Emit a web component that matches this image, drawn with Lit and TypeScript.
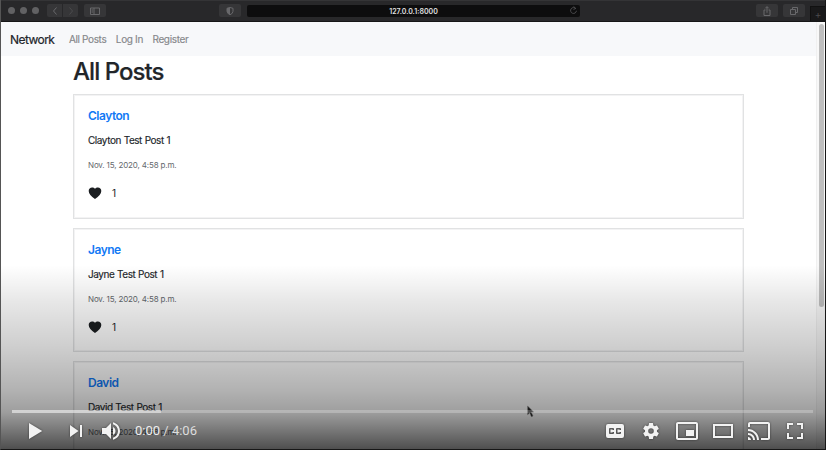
import { LitElement, html, css, svg } from "lit";
import { customElement, property } from "lit/decorators.js";

@customElement("post-card")
class PostCard extends LitElement {
  @property() author = "";

  static styles = css`
    :host { display: block; box-sizing: border-box; height: 124.5px; border: 1px solid #e1e2e3; box-shadow: inset 0 0 0 1px #f3f3f4; padding: 0 14px; color: #212529; }
    .author { padding-top: 13px; height: 29px; line-height: 16px; box-sizing: border-box; font-size: 12px; font-weight: 600; letter-spacing: -0.5px; color: #1279f5; }
    .body { margin: 9px 0 0; height: 14px; line-height: 14px; font-size: 10px; letter-spacing: -0.45px; word-spacing: 0.4px; -webkit-text-stroke: 0.15px; }
    .date { margin: 12px 0 0; height: 12px; line-height: 12px; font-size: 8px; letter-spacing: -0.15px; color: #65696d; }
    .likes { display: flex; align-items: center; gap: 10px; margin-top: 14px; height: 16px; font-size: 10px; }
    .heart { width: 14px; height: 14px; display: block; }
  `;

  render() {
    return html`
      <div class="author">${this.author}</div>
      <div class="body">${this.author} Test Post 1</div>
      <div class="date">Nov. 15, 2020, 4:58 p.m.</div>
      <div class="likes">
        <svg class="heart" viewBox="0 0 14 14"><path fill="#1b1e21" d="M7 13C3 9.8.7 7.7.7 4.9 .7 2.9 2.2 1.4 4.1 1.4c1.1 0 2.2.5 2.9 1.4.7-.9 1.8-1.4 2.9-1.4 1.9 0 3.4 1.5 3.4 3.5C13.3 7.7 11 9.8 7 13z"/></svg>
        <span>1</span>
      </div>`;
  }
}

const icons = {
  play: svg`<path d="M12 26V10l13.2 8z"/>`,
  next: svg`<path d="M12 24l8.5-6L12 12zM22 12v12h2V12z"/>`,
  volume: svg`<path d="M8 21h4l5 5V10l-5 5H8zM19 14v8c1.48-.68 2.5-2.23 2.5-4 0-1.74-1.02-3.26-2.5-4zM19 11.29c2.89.86 5 3.54 5 6.71s-2.11 5.85-5 6.71v2.06c4.01-.91 7-4.49 7-8.77s-2.99-7.86-7-8.77z"/>`,
  captions: svg`<path fill-rule="evenodd" d="M11 11h14a2 2 0 0 1 2 2v10a2 2 0 0 1-2 2H11a2 2 0 0 1-2-2V13a2 2 0 0 1 2-2zM17 17v-1a1 1 0 0 0-1-1h-3a1 1 0 0 0-1 1v4a1 1 0 0 0 1 1h3a1 1 0 0 0 1-1v-1h-1.5v.5h-2v-3h2v.5zM24 17v-1a1 1 0 0 0-1-1h-3a1 1 0 0 0-1 1v4a1 1 0 0 0 1 1h3a1 1 0 0 0 1-1v-1h-1.5v.5h-2v-3h2v.5z"/>`,
  settings: svg`<path fill-rule="evenodd" d="M23.94 18.78c.03-.25.05-.51.05-.78s-.02-.52-.05-.78l1.68-1.32c.15-.12.19-.33.09-.51l-1.6-2.76c-.09-.17-.31-.24-.48-.17l-1.99.8c-.41-.32-.86-.58-1.35-.78l-.3-2.12c-.02-.19-.19-.33-.39-.33h-3.2c-.2 0-.36.14-.39.33l-.3 2.12c-.48.2-.93.47-1.35.78l-1.99-.8c-.18-.07-.39 0-.48.17l-1.6 2.76c-.1.17-.05.39.09.51l1.68 1.32c-.03.25-.05.52-.05.78s.02.52.05.78l-1.68 1.32c-.15.12-.19.33-.09.51l1.6 2.76c.09.17.31.24.48.17l1.99-.8c.41.32.86.58 1.35.78l.3 2.12c.02.19.19.33.39.33h3.2c.2 0 .36-.14.39-.33l.3-2.12c.48-.2.93-.47 1.35-.78l1.99.8c.18.07.39 0 .48-.17l1.6-2.76c.1-.17.05-.39-.09-.51zM18 20.8a2.8 2.8 0 1 1 0-5.6 2.8 2.8 0 0 1 0 5.6z"/>`,
  mini: svg`<path fill-rule="evenodd" d="M25 17h-8v6h8zM29 25V10.98C29 9.88 28.1 9 27 9H9c-1.1 0-2 .88-2 1.98V25c0 1.1.9 2 2 2h18c1.1 0 2-.9 2-2zM27 25.02H9V10.97h18z"/>`,
  theater: svg`<path fill-rule="evenodd" d="M28 11H8v14h20zM26 23H10V13h16z"/>`,
  cast: svg`<path d="M27 9H9c-1.1 0-2 .9-2 2v3h2v-3h18v14h-7v2h7c1.1 0 2-.9 2-2V11c0-1.1-.9-2-2-2zM7 24v3h3c0-1.66-1.34-3-3-3zM7 20v2c2.76 0 5 2.24 5 5h2c0-3.87-3.13-7-7-7zM7 16v2c4.97 0 9 4.03 9 9h2c0-6.08-4.93-11-11-11z"/>`,
  full: svg`<path d="M10 16h2v-4h4v-2h-6zM20 10v2h4v4h2v-6zM24 24h-4v2h6v-6h-2zM12 20h-2v6h6v-2h-4z"/>`,
};
const icon = (shape: unknown) => html`<svg class="icon" viewBox="0 0 36 36">${shape}</svg>`;

@customElement("app-root")
class AppRoot extends LitElement {
  static styles = css`
    :host { display: block; position: relative; box-sizing: border-box; width: 826px; height: 450px; overflow: hidden; background: #fff; font-family: Inter, "Liberation Sans", sans-serif; }
    * { box-sizing: border-box; }
    svg { display: block; flex: none; }
    .toolbar { display: flex; align-items: center; height: 22px; padding: 0 0 1px 8px; background: #28282a; border-top: 1px solid #343436; border-bottom: 1px solid #161617; }
    .dots { display: flex; gap: 5px; }
    .dot { width: 7px; height: 7px; border-radius: 50%; background: #616163; }
    .key { height: 13px; display: flex; align-items: center; justify-content: center; background: #363638; border-radius: 2px; }
    .key svg { width: 12px; height: 12px; fill: none; stroke: #68686b; stroke-width: 1; }
    .back { width: 15px; margin-left: 8px; border-radius: 2px 0 0 2px; }
    .forward { width: 15px; margin-left: 1px; border-radius: 0 2px 2px 0; }
    .key.forward svg { stroke: #4b4b4d; }
    .sidebar { width: 22px; margin-left: 6px; }
    .shield { width: 22px; margin-left: 113px; }
    .address { position: relative; display: flex; align-items: center; justify-content: center; width: 333px; height: 12px; margin-left: 6px; padding-top: 1px; border-radius: 2px; background: #0d0d0e; color: #e0e0e0; font-size: 7px; font-weight: 600; }
    .reload { position: absolute; right: 1px; top: 0; width: 11px; height: 11px; fill: none; stroke: #4e4e50; stroke-width: 1; }
    .share { width: 22px; margin-left: 176px; }
    .tabs { width: 22px; margin-left: 5px; }
    .plus { display: flex; align-items: center; justify-content: center; width: 15px; height: 15px; margin: 6px 0 0 5px; background: #19191a; border-left: 1px solid #111; border-top: 1px solid #111; color: #4a4a4c; font-size: 10px; }
    .nav { display: flex; align-items: center; height: 34px; padding-left: 10px; background: #f7f8fa; color: #85878a; font-size: 10px; letter-spacing: -0.35px; }
    .brand { margin-right: 14.5px; color: #22252a; font-size: 12px; letter-spacing: -0.55px; -webkit-text-stroke: 0.2px; }
    .link { margin-right: 9.5px; -webkit-text-stroke: 0.15px; }
    .page { width: 671px; margin-left: 73px; }
    .title { margin: 0; height: 38px; line-height: 31px; font-size: 24px; font-weight: 500; letter-spacing: -0.95px; color: #212529; -webkit-text-stroke: 0.2px; }
    .feed { display: flex; flex-direction: column; gap: 9px; }
    .scroll { position: absolute; right: 1px; top: 22px; width: 9px; height: 428px; padding: 2px 2px 0; background: #f8f8f8; border-left: 1px solid #f0f0f0; }
    .thumb { width: 5px; height: 283px; border-radius: 3px; background: #bfbfbf; }
    .shade { position: absolute; inset: 0; background: linear-gradient(rgba(0,0,0,0) 265px, rgba(0,0,0,.09) 300px, rgba(0,0,0,.2) 350px, rgba(0,0,0,.3) 390px, rgba(0,0,0,.38) 412px, rgba(0,0,0,.53) 430px, rgba(0,0,0,.69) 449px); }
    .frame { position: absolute; inset: 0; border-left: 1px solid #555; border-right: 1px solid #171717; border-bottom: 1px solid #171717; }
    .player { position: absolute; left: 12px; right: 13px; top: 410px; }
    .track { height: 3px; background: rgba(255,255,255,.24); }
    .loaded { width: 149px; height: 3px; background: rgba(255,255,255,.4); }
    .controls { display: flex; align-items: center; height: 36px; margin-left: 5px; fill: #f2f2f2; }
    .icon { width: 36px; height: 36px; filter: drop-shadow(0 0 1px rgba(0,0,0,.5)); }
    .next { margin-left: 5px; }
    .time { margin-left: 5px; color: #eee; font: 13px/36px Roboto, sans-serif; white-space: pre; }
    .total { color: #ddd; }
    .right { display: flex; margin-left: auto; }
    .cursor { position: absolute; left: 526px; top: 405px; width: 9px; height: 13px; }
  `;

  render() {
    return html`
      <div class="toolbar">
        <div class="dots"><i class="dot"></i><i class="dot"></i><i class="dot"></i></div>
        <div class="key back"><svg viewBox="0 0 12 12"><path d="M7.5 2.5L4.5 6l3 3.5"/></svg></div>
        <div class="key forward"><svg viewBox="0 0 12 12"><path d="M4.5 2.5l3 3.5-3 3.5"/></svg></div>
        <div class="key sidebar"><svg viewBox="0 0 12 12"><path d="M1.5 3h9v6.500h-9zM5 3v6.500M2.500 5h1.500M2.500 7h1.500"/></svg></div>
        <div class="key shield"><svg viewBox="0 0 12 12"><path d="M6 2.5l3 .8v3Q9 8.500 6 9.800 3 8.500 3 6.300v-3z"/><path fill="#68686b" stroke="none" d="M6 2.500v7.300Q3 8.500 3 6.300v-3z"/></svg></div>
        <div class="address">127.0.0.1:8000<svg class="reload" viewBox="0 0 12 12"><path d="M8.500 4A3.200 3.200 0 1 0 9.200 6.300M6 1.500l2.500 2.300L6 4.800"/></svg></div>
        <div class="key share"><svg viewBox="0 0 12 12"><path d="M4.500 5H3v5.500h6V5H7.500M6 7.800V1.800M4.300 3.300L6 1.600l1.700 1.700"/></svg></div>
        <div class="key tabs"><svg viewBox="0 0 12 12"><path d="M2.500 4.500h5V9.500h-5zM4.500 4.500v-2h5v5h-2"/></svg></div>
        <div class="plus">+</div>
      </div>
      <nav class="nav"><span class="brand">Network</span><span class="link">All Posts</span><span class="link">Log In</span><span class="link">Register</span></nav>
      <main class="page">
        <h1 class="title">All Posts</h1>
        <div class="feed">${["Clayton", "Jayne", "David"].map((name) => html`<post-card author=${name}></post-card>`)}</div>
      </main>
      <div class="scroll"><div class="thumb"></div></div>
      <svg class="cursor" viewBox="0 0 10 14"><path d="M1.800 1v9.500l2.300-2 1.900 4.200 1.800-.8-2-4 2.700-.3z" fill="#222" stroke="#999" stroke-width=".6"/></svg>
      <div class="shade"></div>
      <div class="frame"></div>
      <div class="player">
        <div class="track"><div class="loaded"></div></div>
        <div class="controls">
          ${icon(icons.play)}<div class="next">${icon(icons.next)}</div>${icon(icons.volume)}
          <div class="time">0:00<span class="total"> / 4:06</span></div>
          <div class="right">${[icons.captions, icons.settings, icons.mini, icons.theater, icons.cast, icons.full].map(icon)}</div>
        </div>
      </div>`;
  }
}
